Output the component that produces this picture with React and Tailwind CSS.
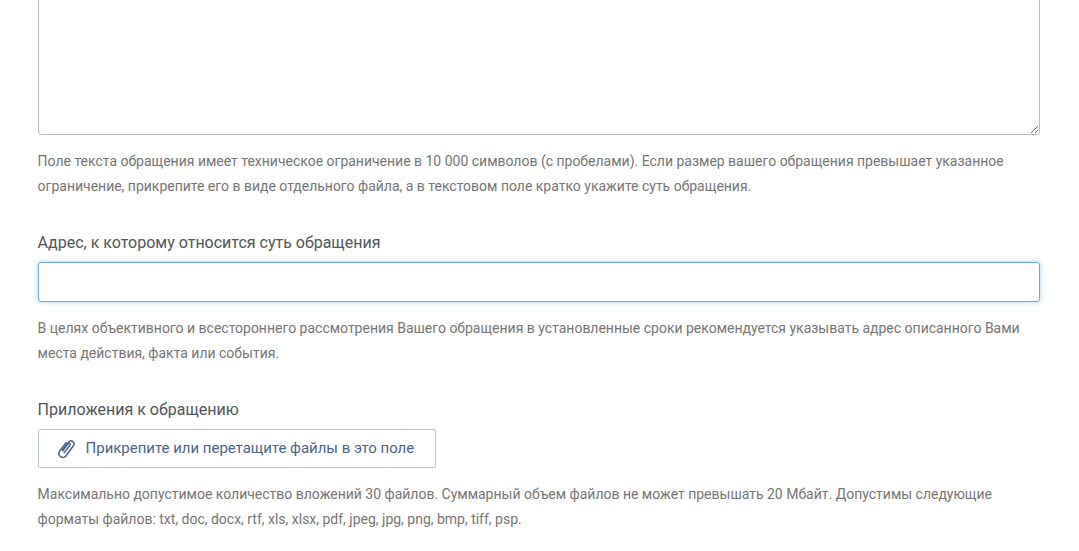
export default function App() {
  return (
    <div className="w-[1079px] h-[551px] overflow-hidden bg-white font-['Roboto',sans-serif] relative">
      <div className="pl-[38px] w-[1040px] mt-[-10px]">
        <textarea className="block w-[1002px] h-[145px] border border-[#b9bdc0] rounded-[3px] bg-white outline-none" />
        <p className="mt-[14px] -ml-[0.4px] text-[13.99px] leading-[25px] text-[#757575]">Поле текста обращения имеет техническое ограничение в 10 000 символов (с пробелами). Если размер вашего обращения превышает указанное ограничение, прикрепите его в виде отдельного файла, а в текстовом поле кратко укажите суть обращения.</p>
        <div className="mt-[32px] -ml-[0.4px] text-[16px] leading-[24px] text-[#50555a]">Адрес, к которому относится суть обращения</div>
        <input className="block mt-[7px] w-[1002px] h-[40px] border border-[#6fa9d8] rounded-[3px] bg-white outline-none shadow-[0_0_5px_rgba(90,165,225,0.55)]" />
        <p className="mt-[14px] -ml-[0.4px] text-[13.99px] leading-[25px] text-[#757575]">В целях объективного и всестороннего рассмотрения Вашего обращения в установленные сроки рекомендуется указывать адрес описанного Вами места действия, факта или события.</p>
        <div className="mt-[32px] -ml-[0.4px] text-[16px] leading-[24px] text-[#50555a]">Приложения к обращению</div>
        <div className="mt-[7px] w-[398px] h-[39px] border border-[#b4c7d8] rounded-[2px] flex items-center pl-[18px] gap-[9.6px] text-[14.96px] text-[#46648a]">
          <svg width="19" height="20" viewBox="0 0 19 20" fill="none" stroke="#46648a" strokeWidth="1.5" strokeLinecap="round" strokeLinejoin="round" className="shrink-0">
            <path d="M5.6 11 11.6 3.2a3 3 0 0 1 4.8 3.6L8.8 17a3.9 3.9 0 0 1-6.2-4.7L9 3.8" />
            <path d="M7.2 13.6 13 6.2a1.2 1.2 0 0 0-1.9-1.5L5.6 11.8" />
          </svg>
          <span>Прикрепите или перетащите файлы в это поле</span>
        </div>
        <p className="mt-[14px] -ml-[0.4px] text-[13.99px] leading-[25px] text-[#757575]">Максимально допустимое количество вложений 30 файлов. Суммарный объем файлов не может превышать 20 Мбайт. Допустимы следующие форматы файлов: txt, doc, docx, rtf, xls, xlsx, pdf, jpeg, jpg, png, bmp, tiff, psp.</p>
      </div>
    </div>
  );
}
